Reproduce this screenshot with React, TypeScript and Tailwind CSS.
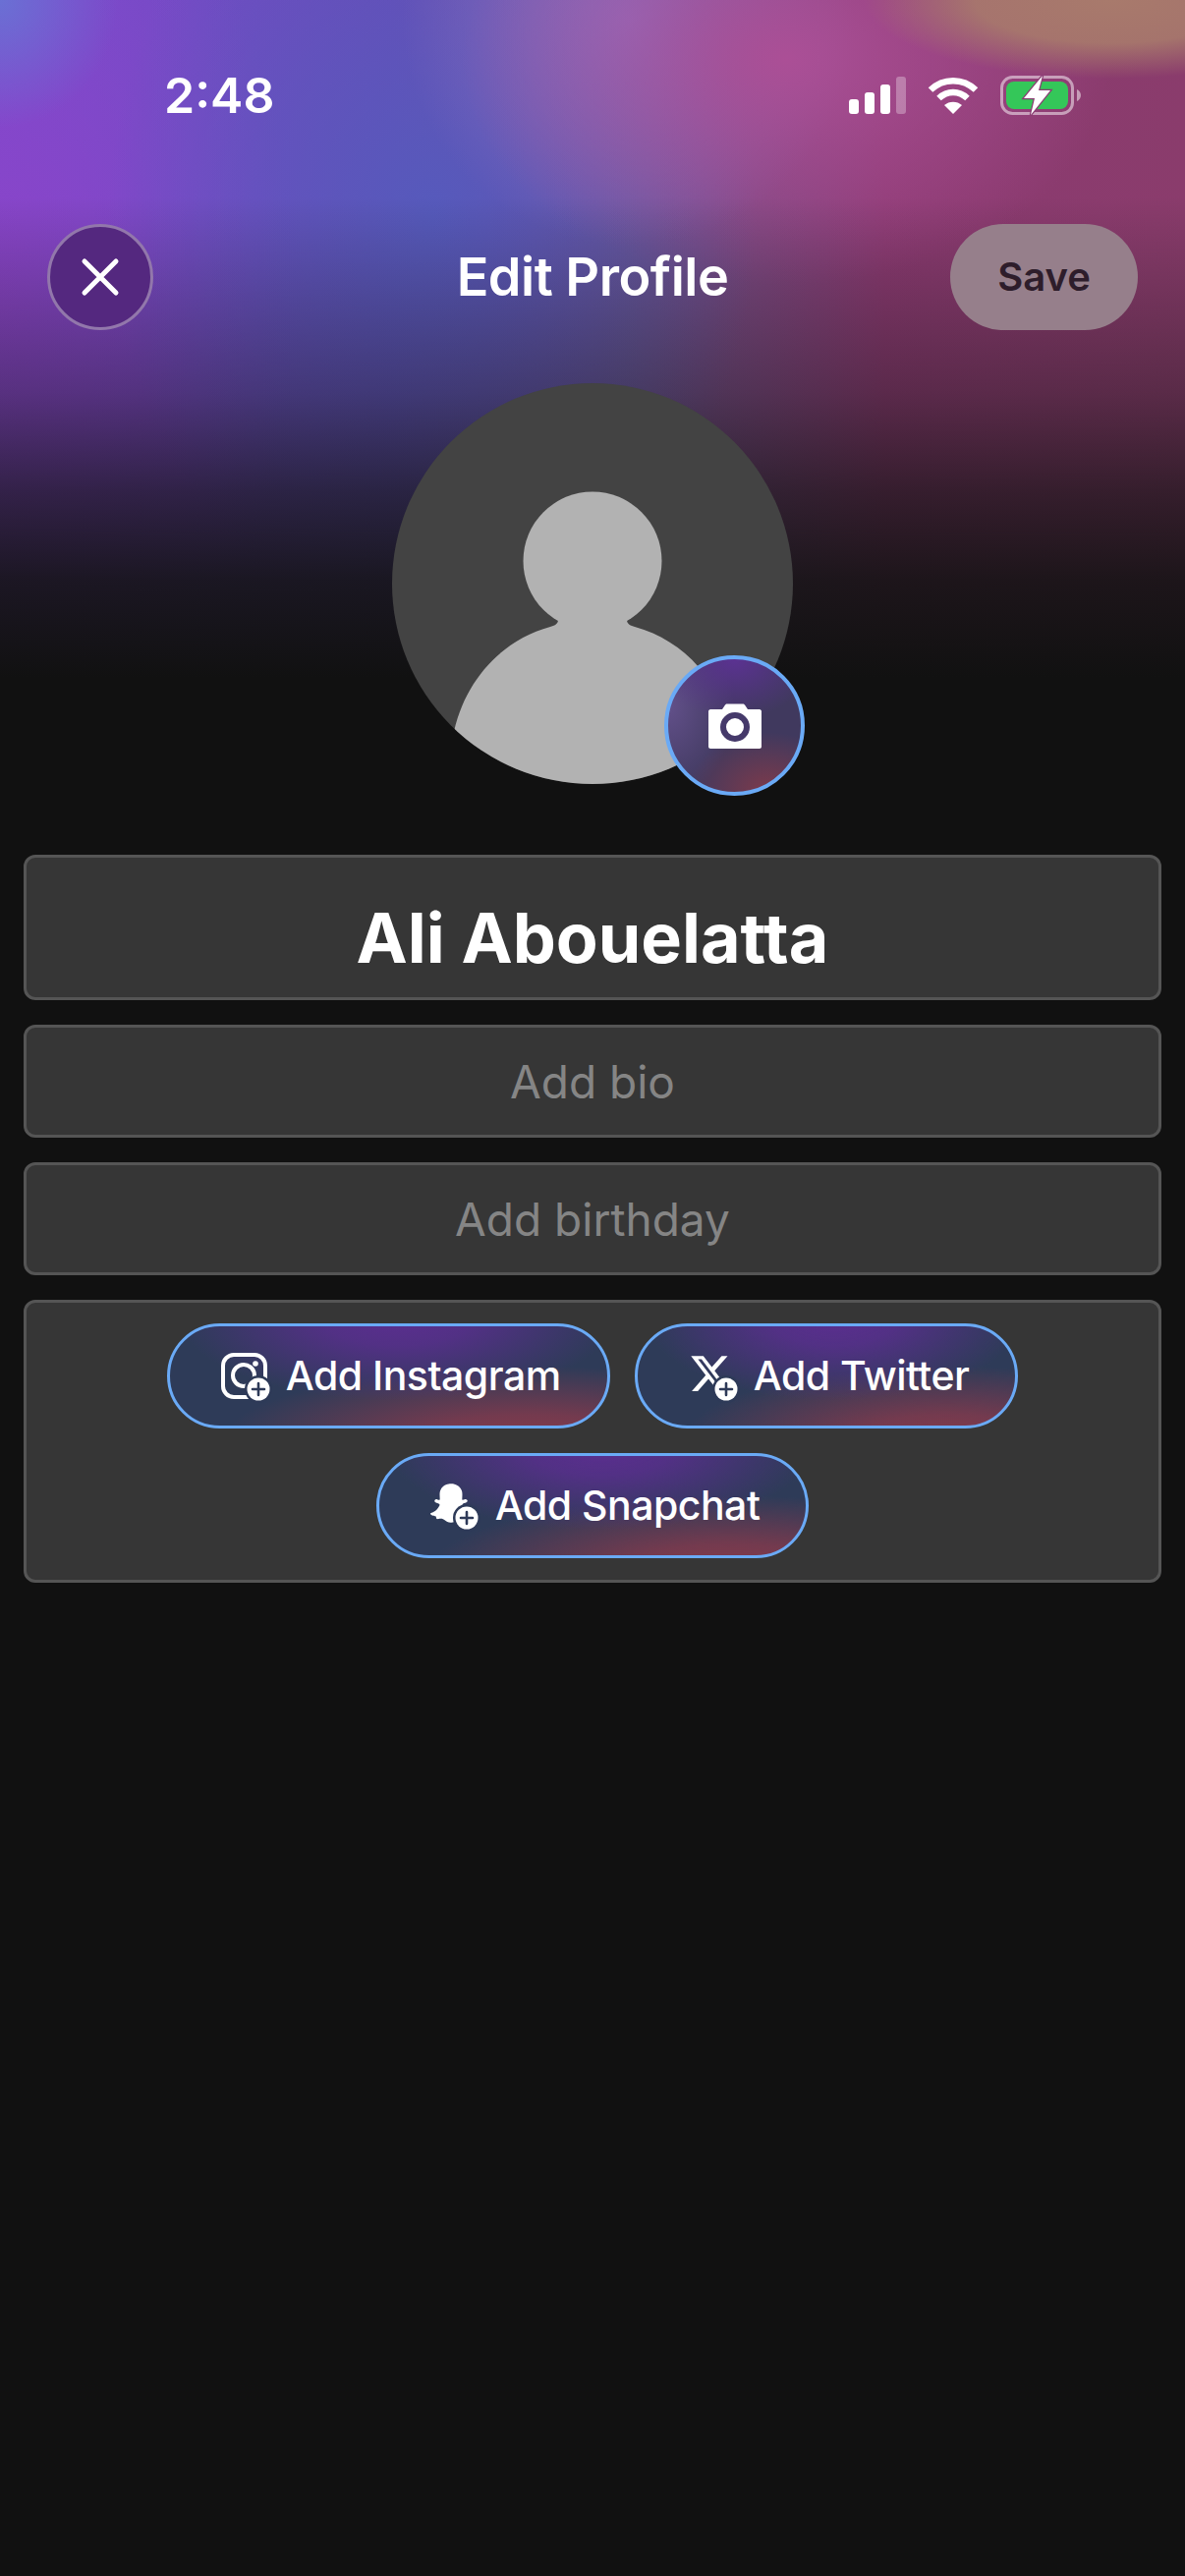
import type { ReactNode } from 'react'
import { FaSnapchatGhost } from 'react-icons/fa'
import { FaXTwitter } from 'react-icons/fa6'

function PlusBadge({ className }: { className: string }) {
  return (
    <svg viewBox="0 0 28 28" className={`absolute ${className}`}>
      <circle cx="14" cy="14" r="14" fill="#2e3a58" />
      <circle cx="14" cy="14" r="11.5" fill="#fff" />
      <path d="M14 8v12M8 14h12" stroke="#2e3a58" strokeWidth="2.6" strokeLinecap="round" />
    </svg>
  )
}

function InstagramIcon() {
  return (
    <svg viewBox="0 0 50 50" className="w-[50px] h-[50px]" fill="none" stroke="#fff" strokeWidth="4">
      <rect x="2" y="3" width="43" height="43" rx="11" />
      <circle cx="23" cy="24" r="11" />
      <circle cx="35" cy="12" r="2.8" fill="#fff" stroke="none" />
    </svg>
  )
}

function LinkButton({ icon, label }: { icon: ReactNode; label: string }) {
  return (
    <div className="flex items-center h-[107px] pl-[52px] pr-[47px] gap-4 rounded-full border-[3px] border-[#6aaaf6] bg-[radial-gradient(ellipse_50%_85%_at_52%_-10%,#5b2e90_0%,#5b2e90cc_35%,#5b2e9000_100%),radial-gradient(ellipse_70%_75%_at_82%_115%,#853a4c_0%,#853a4ccc_35%,#853a4c00_100%),linear-gradient(#2e3b58,#2e3b58)]">
      <div className="relative w-[50px] h-[50px] flex items-center justify-start">{icon}</div>
      <span className="text-[41px] leading-none font-medium text-white tracking-[-0.5px]">{label}</span>
    </div>
  )
}

function Field({ children, height }: { children: ReactNode; height: string }) {
  return (
    <div className={`flex items-center justify-center ${height} rounded-[12px] border-[3px] border-[#555555] bg-[#363636]`}>
      {children}
    </div>
  )
}

export default function App() {
  return (
    <div
      className="w-[1206px] h-[2622px] overflow-hidden text-white bg-no-repeat bg-[linear-gradient(180deg,#11111100_200px,#11111166_400px,#111111b3_500px,#111111e6_590px,#111111_690px),radial-gradient(ellipse_250px_80px_at_1130px_0px,#a87a6c_0%,#a87a6ce6_55%,#a87a6c00_100%),radial-gradient(ellipse_330px_230px_at_800px_60px,#ab4f96_0%,#ab4f9600_100%),radial-gradient(ellipse_230px_230px_at_640px_20px,#8a70c4_0%,#8a70c400_100%),radial-gradient(ellipse_330px_420px_at_440px_220px,#565abc_0%,#565abc00_100%),radial-gradient(ellipse_120px_130px_at_0px_0px,#6a70d4_0%,#6a70d400_100%),radial-gradient(ellipse_300px_500px_at_0px_300px,#8a44c8_0%,#8a44c800_100%),linear-gradient(90deg,#7a4cd0_0px,#6a4bb8_400px,#6f5590_640px,#8c3a72_900px,#8a3c6c_1206px)]"
      style={{ fontFamily: 'Inter, "Noto Sans", sans-serif' }}
    >
      {/* status bar */}
      <div className="flex items-center justify-between h-[44px] mt-[75px] pl-[167px] pr-[106px]">
        <span className="text-[50px] leading-none font-semibold">2:48</span>
        <div className="flex items-center gap-[22px]">
          <svg viewBox="0 0 58 38" className="w-[58px] h-[38px]" fill="#fff">
            <rect x="0" y="23" width="10" height="15" rx="3" />
            <rect x="16" y="16" width="10" height="22" rx="3" />
            <rect x="32" y="8" width="10" height="30" rx="3" />
            <rect x="48" y="0" width="10" height="38" rx="3" fillOpacity="0.3" />
          </svg>
          <svg viewBox="0 0 52 38" className="w-[52px] h-[38px]" fill="none" stroke="#fff" strokeWidth="6.5">
            <path d="M3 13.5C16 1 36 1 49 13.5" />
            <path d="M11.5 22C20 14 32 14 40.5 22" />
            <path d="M26 38L17 29C22 24.5 30 24.5 35 29Z" fill="#fff" stroke="none" />
          </svg>
          <svg viewBox="0 0 82 42" className="w-[82px] h-[42px]">
            <rect x="1.5" y="2.5" width="72" height="37" rx="11" fill="none" stroke="#fff" strokeOpacity="0.5" strokeWidth="3" />
            <rect x="6" y="7" width="63" height="28" rx="8" fill="#34c759" />
            <path d="M78 15v12c2.5-1 4-3.5 4-6s-1.500-5-4-6Z" fill="#fff" fillOpacity="0.5" />
            <path d="M43 1L24 24h11l-4 17 20-25H39Z" fill="#fff" stroke="#8a3c72" strokeWidth="2.500" paintOrder="stroke" />
          </svg>
        </div>
      </div>

      {/* header */}
      <div className="grid grid-cols-[1fr_auto_1fr] items-center h-[108px] mt-[109px] px-[48px]">
        <button className="flex items-center justify-center w-[108px] h-[108px] rounded-full border-[3px] border-[#9277ab] bg-[#54287f]">
          <svg viewBox="0 0 40 40" className="w-[40px] h-[40px]" stroke="#fff" strokeWidth="5" strokeLinecap="round">
            <path d="M4 4L36 36M36 4L4 36" />
          </svg>
        </button>
        <h1 className="text-[54px] leading-none font-semibold tracking-[-0.5px]">Edit Profile</h1>
        <button className="flex items-center justify-center justify-self-end w-[191px] h-[108px] rounded-full bg-[#967f8b] text-[#2e1d2b] text-[40px] font-semibold">
          Save
        </button>
      </div>

      {/* avatar */}
      <div className="relative w-[408px] h-[408px] mt-[54px] mx-auto">
        <div className="w-full h-full rounded-full overflow-hidden bg-[#434343]">
          <svg viewBox="0 0 408 408" className="w-full h-full" fill="#b2b2b2">
            <circle cx="204" cy="181" r="70.500" />
            <path d="M155 231C163 237 169 238 169 241C169 245 165 247 161 248C110 262 72 305 62 360V420H346V360C336 305 298 262 247 248C243 247 239 245 239 241C239 238 245 237 253 231Z" />
          </svg>
        </div>
        <div className="absolute left-[277px] top-[277px] flex items-center justify-center w-[143px] h-[143px] rounded-full border-[4px] border-[#6aaaf6] bg-[radial-gradient(ellipse_60%_45%_at_50%_0%,#5b3292_0%,#5b329200_100%),radial-gradient(ellipse_60%_45%_at_75%_100%,#7d3a4b_0%,#7d3a4b00_100%),radial-gradient(ellipse_50%_70%_at_0%_35%,#62508a_0%,#62508a00_100%),linear-gradient(#40395e,#40395e)]">
          <svg viewBox="0 0 54 46" className="w-[54px] h-[46px]">
            <path d="M2 6H14L17 1.500C17.500 1 18 .5 19 .5H35C36 .5 36.500 1 37 1.500L40 6H52C53 6 54 7 54 8V44C54 45 53 46 52 46H2C1 46 0 45 0 44V8C0 7 1 6 2 6Z" fill="#fff" />
            <circle cx="27" cy="24" r="12" fill="#fff" stroke="#45396a" strokeWidth="6" />
          </svg>
        </div>
      </div>

      {/* fields */}
      <div className="flex flex-col gap-[25px] mx-[24px] mt-[72px]">
        <Field height="h-[148px]">
          <span className="pt-[22px] text-[70px] leading-none font-bold">Ali Abouelatta</span>
        </Field>
        <Field height="h-[115px]">
          <span className="text-[46px] leading-none text-[#858585]">Add bio</span>
        </Field>
        <Field height="h-[115px]">
          <span className="text-[46px] leading-none text-[#858585]">Add birthday</span>
        </Field>
        <div className="flex flex-wrap justify-center content-start gap-[25px] h-[288px] pt-[21px] rounded-[12px] border-[3px] border-[#555555] bg-[#363636]">
          <LinkButton
            label="Add Instagram"
            icon={
              <>
                <InstagramIcon />
                <PlusBadge className="left-[24px] top-[24px] w-[28px] h-[28px]" />
              </>
            }
          />
          <LinkButton
            label="Add Twitter"
            icon={
              <>
                <FaXTwitter className="w-[44px] h-[44px] -mt-[6px]" color="#fff" />
                <PlusBadge className="left-[24px] top-[24px] w-[28px] h-[28px]" />
              </>
            }
          />
          <LinkButton
            label="Add Snapchat"
            icon={
              <>
                <FaSnapchatGhost className="w-[42px] h-[42px] -mt-[6px]" color="#fff" />
                <PlusBadge className="left-[23px] top-[23px] w-[28px] h-[28px]" />
              </>
            }
          />
        </div>
      </div>
    </div>
  )
}
